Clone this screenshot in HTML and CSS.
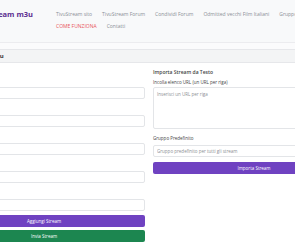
FILE: index.html
```html
<!DOCTYPE html>
<html lang="it">
<head>
    <meta charset="UTF-8">
    <meta name="viewport" content="width=device-width, initial-scale=1.0">
    <title>TivuStream m3u</title>
    <link rel="stylesheet" href="styles.css">
</head>
<body>
    <header class="topbar">
        <div class="brand-wrap">
            <a class="brand" href="#">TivuStream m3u</a>
            <div class="tagline">Gestore playlist per</div>
        </div>
        <nav class="links">
            <a href="#">TivuStream sito</a>
            <a href="#">TivuStream Forum</a>
            <a href="#">Condividi Forum</a>
            <a href="#">Odmitted vecchi Film Italiani</a>
            <a href="#">Gruppo Telegram</a>
            <a href="#" class="hot">COME FUNZIONA</a>
            <a href="#">Contatti</a>
        </nav>
    </header>

    <main class="card">
        <div class="card-head">Gestione Stream m3u</div>
        <div class="card-body">
            <section class="col">
                <h6>Aggiungi Stream</h6>
                <label>Nome</label>
                <input type="text" placeholder="Nome">
                <label>Gruppo</label>
                <input type="text" value="Canali Italiani Full HD - all">
                <label>URL</label>
                <input type="text" placeholder="URL">
                <label>Logo</label>
                <input type="text" placeholder="Logo">
                <label>ID</label>
                <input type="text" class="last" placeholder="ID">
                <button class="btn purple">Aggiungi Stream</button>
                <button class="btn green">Invia Stream</button>
            </section>
            <section class="col">
                <h6>Importa Stream da Testo</h6>
                <label>Incolla elenco URL (un URL per riga)</label>
                <textarea placeholder="Inserisci un URL per riga"></textarea>
                <label>Gruppo Predefinito</label>
                <input type="text" placeholder="Gruppo predefinito per tutti gli stream">
                <button class="btn purple top">Importa Stream</button>
            </section>
        </div>
    </main>
</body>
</html>
```

FILE: styles.css
```css
* {
    margin: 0;
    padding: 0;
    box-sizing: border-box;
    font-family: "Open Sans", "Liberation Sans", sans-serif;
}

body {
    background: #fbfbfc;
    color: #333;
    overflow: hidden;
}

.topbar {
    display: flex;
    align-items: flex-start;
    background: #f8f9fa;
    border-bottom: 1px solid #ececef;
    padding: 8px 0 10px;
    width: 460px;
    margin-left: -40px;
}

.brand-wrap {
    width: 73px;
}

.brand {
    display: block;
    text-align: right;
    font-size: 7.5px;
    line-height: 12px;
    font-weight: 700;
    color: #5b2d90;
    text-decoration: none;
}

.tagline {
    font-size: 4px;
    line-height: 7px;
    color: #888;
    white-space: nowrap;
}

.links {
    display: flex;
    flex-wrap: wrap;
    width: 300px;
    margin-left: 18px;
}

.links a {
    padding: 0 5px;
    font-size: 5px;
    line-height: 12px;
    color: #8a8f96;
    text-decoration: none;
    white-space: nowrap;
}

.links a.hot {
    color: #e8545a;
}

.card {
    width: 424px;
    margin: 6px 0 0 -64px;
    background: #fff;
    border: 1px solid #e6e7ea;
    border-radius: 3px;
}

.card-head {
    background: #f3f4f5;
    border-bottom: 1px solid #e6e7ea;
    padding: 0 2px;
    font-size: 6px;
    line-height: 12px;
    font-weight: 700;
    color: #333;
    white-space: nowrap;
}

.card-body {
    display: grid;
    grid-template-columns: 202px 202px;
    gap: 8px;
    padding: 5px 6px 5px;
}

.col {
    display: flex;
    flex-direction: column;
}

h6 {
    font-size: 5px;
    line-height: 8px;
    font-weight: 600;
    color: #444;
    margin-bottom: 2px;
}

label {
    font-size: 4.5px;
    line-height: 8px;
    color: #444;
    margin-bottom: 1px;
    white-space: nowrap;
}

input,
textarea {
    height: 12px;
    border: 1px solid #e3e5e8;
    border-radius: 2px;
    padding: 0 3px;
    font-size: 4.5px;
    color: #444;
    background: #fff;
    margin-bottom: 7px;
    outline: none;
}

input.last {
    margin-bottom: 4px;
}

textarea {
    height: 42px;
    padding: 3px;
    resize: none;
    margin-bottom: 5px;
}

.col:last-child label:nth-of-type(2) {
    margin-bottom: 3px;
}

.col:last-child input {
    margin-bottom: 0;
}

::placeholder {
    color: #8c8f94;
}

.btn {
    height: 12px;
    border: none;
    border-radius: 2px;
    color: #fff;
    font-size: 4.5px;
    margin-bottom: 3px;
}

.btn.top {
    margin-top: 5px;
}

.purple {
    background: #6f42c1;
}

.green {
    background: #1c8650;
}
```
